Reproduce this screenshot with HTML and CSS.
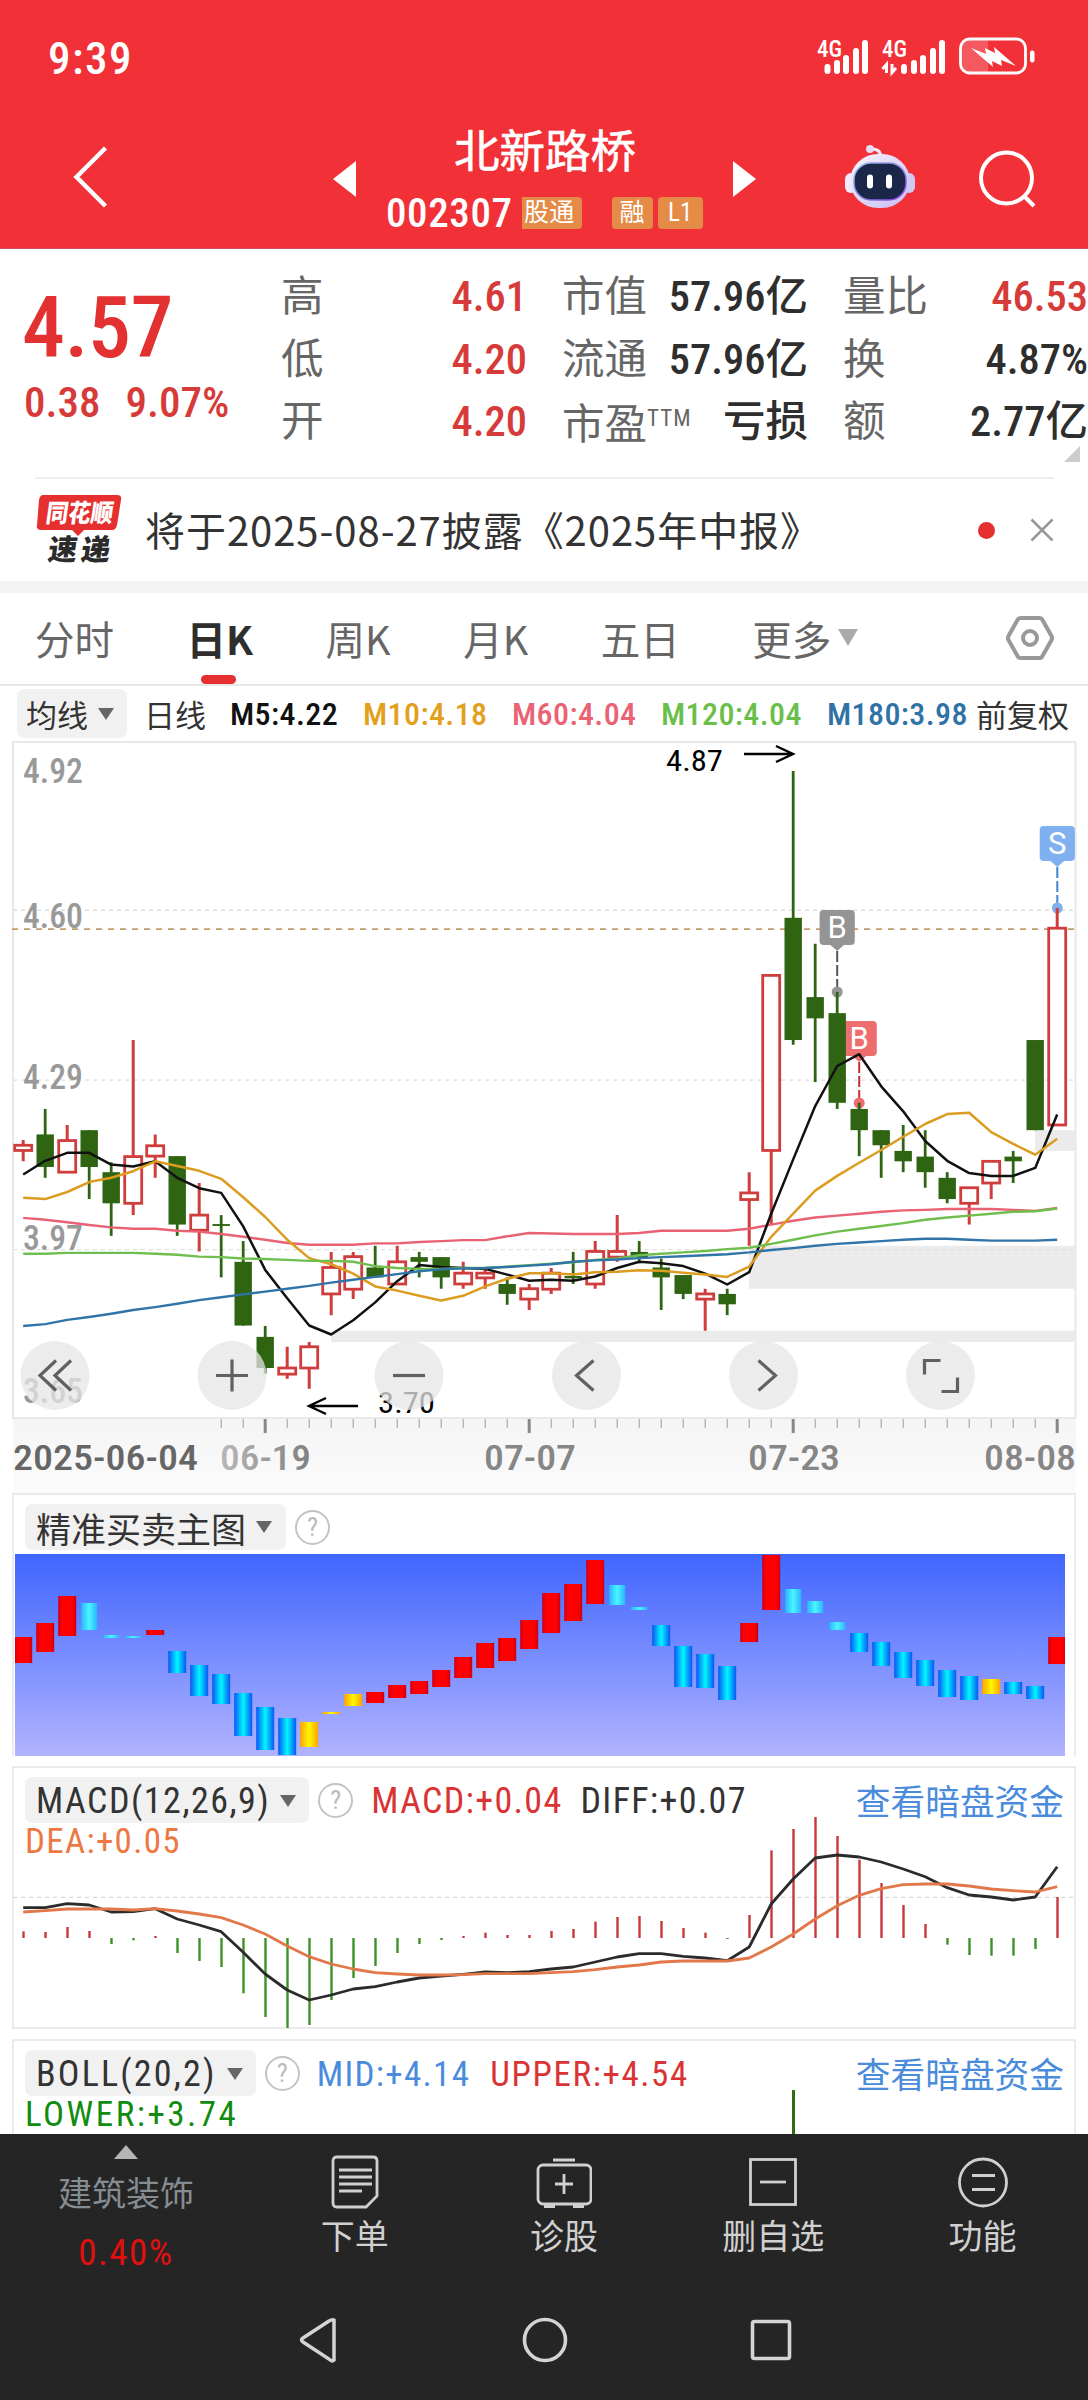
FILE: index.html
```html
<!DOCTYPE html>
<html lang="zh-CN">
<head>
<meta charset="utf-8">
<title>北新路桥 002307</title>
<link rel="stylesheet" href="styles.css">
</head>
<body>
<header class="top">
  <div class="status">
    <span class="clock">9:39</span>
    <svg class="status-icons" width="220" height="40" viewBox="0 0 220 40">
      <g fill="#fff" font-size="23" class="cond">
        <text x="1" y="18" textLength="25">4G</text>
        <text x="66" y="18" textLength="25">4G</text>
      </g>
      <g stroke="#fff" stroke-width="6" stroke-linecap="round">
        <path d="M11.500 28v4M21 24v8M30 19v13M40 12v20M49 4v28"/>
        <path d="M88 28v4M98 24v8M107 19v13M117 12v20M126 4v28"/>
      </g>
      <path d="M70.500 34V25.500l-4 4.500M76 25v8.500l4-4.500" fill="none" stroke="#fff" stroke-width="3"/>
      <path d="M152 1h20v32h-20q-7-1-7-8V9q0-7 7-8z" fill="#fff" opacity=".2"/>
      <rect x="144.500" y="0" width="65" height="34" rx="9" fill="none" stroke="#fff" stroke-width="2.800"/>
      <rect x="214" y="11.500" width="4.500" height="12" rx="2.200" fill="#fff"/>
      <path d="M155 9l15 6-1-6 10 5-1-6 22 19-15-6 1 6-10-5 1 6z" fill="#fff"/>
    </svg>
  </div>
  <div class="title-bar">
    <svg class="back" width="40" height="68" viewBox="0 0 40 68"><path d="M35.500 5L6.500 34l29 29" fill="none" stroke="#fff" stroke-width="4.500"/></svg>
    <svg class="prev" width="24" height="36" viewBox="0 0 24 36"><path d="M23 0v36L0 18z" fill="#fff"/></svg>
    <div class="stock">
      <h1>北新路桥</h1>
      <div class="code-row">
        <span class="code">002307</span>
        <span class="tag tag-cut">股通</span>
        <span class="tag tag-gap">融</span>
        <span class="tag tag-level">L1</span>
      </div>
    </div>
    <svg class="next" width="24" height="36" viewBox="0 0 24 36"><path d="M0 0v36l23-18z" fill="#fff"/></svg>
    <svg class="robot" width="72" height="68" viewBox="0 0 72 68">
      <defs>
        <linearGradient id="head" x1="0" y1="0" x2="1" y2="1"><stop offset="0" stop-color="#fbf4fb"/><stop offset="1" stop-color="#c4bdf4"/></linearGradient>
        <linearGradient id="rim" x1="0" y1="0" x2="1" y2="1"><stop offset="0" stop-color="#8fc3e8"/><stop offset="1" stop-color="#8a3fe0"/></linearGradient>
      </defs>
      <path d="M27 6q9-1 10 8" fill="none" stroke="#f3e6f5" stroke-width="3"/>
      <circle cx="26" cy="6" r="4" fill="#eadcf3"/>
      <rect x="1" y="30" width="12" height="20" rx="6" fill="#efe9fb"/>
      <rect x="59" y="30" width="12" height="20" rx="6" fill="#cfc8f5"/>
      <rect x="6" y="11" width="60" height="54" rx="28" fill="url(#head)"/>
      <rect x="10" y="20" width="52" height="37" rx="17" fill="#1b2749" stroke="url(#rim)" stroke-width="1.500"/>
      <path d="M26 34.500v8M45 34.500v8" stroke="#fff" stroke-width="6" stroke-linecap="round"/>
    </svg>
    <svg class="search" width="64" height="64" viewBox="0 0 64 64"><g fill="none" stroke="#fff" stroke-width="4"><circle cx="31.500" cy="31" r="25.500"/><path d="M49 49l10 10"/></g></svg>
  </div>
</header>

<section class="quote">
  <div class="price-box">
    <div class="price">4.57</div>
    <div class="change"><span>0.38</span><span>9.07%</span></div>
  </div>
  <dl class="stats">
    <div><dt>高</dt><dd class="up">4.61</dd></div>
    <div><dt>市值</dt><dd>57.96亿</dd></div>
    <div><dt>量比</dt><dd class="up">46.53</dd></div>
    <div><dt>低</dt><dd class="up">4.20</dd></div>
    <div><dt>流通</dt><dd>57.96亿</dd></div>
    <div><dt>换</dt><dd>4.87%</dd></div>
    <div><dt>开</dt><dd class="up">4.20</dd></div>
    <div><dt>市盈<small>TTM</small></dt><dd>亏损</dd></div>
    <div><dt>额</dt><dd>2.77亿</dd></div>
  </dl>
  <span class="corner"></span>
</section>

<section class="news">
  <svg class="brand" width="88" height="84" viewBox="0 0 88 84">
    <path d="M8 8h74q5 0 4 5l-4 25q-1 5-5 5H49l-6 6-6-6H6q-5 0-4-5l2-25q1-5 4-5z" fill="#e5302f"/>
    <g class="cjk" font-weight="900">
      <text transform="translate(10 35) skewX(-8)" font-size="25" fill="#fff" textLength="67" lengthAdjust="spacingAndGlyphs">同花顺</text>
      <text transform="translate(12 73) skewX(-8)" font-size="29" fill="#2b2b2b" textLength="62">速递</text>
    </g>
  </svg>
  <span class="headline">将于2025-08-27披露《2025年中报》</span>
  <span class="dot"></span>
  <svg width="24" height="24" viewBox="0 0 24 24"><path d="M1.500 1.500l21 21M22.500 1.500l-21 21" stroke="#999" stroke-width="2.500"/></svg>
</section>

<nav class="tabs">
  <span>分时</span>
  <span class="active">日K</span>
  <span>周K</span>
  <span>月K</span>
  <span>五日</span>
  <span>更多<i class="caret light"></i></span>
  <svg class="gear" width="50" height="50" viewBox="0 0 50 50"><g fill="none" stroke="#999" stroke-width="4"><path d="M15.500 5h19q2 0 3 2l9 16q1 2 0 4l-9 16q-1 2-3 2h-19q-2 0-3-2L3.500 27q-1-2 0-4l9-16q1-2 3-2z"/><circle cx="25" cy="25" r="7"/></g></svg>
</nav>

<div class="ma-row">
  <span class="pill">均线<i class="caret"></i></span>
  <span class="ma-name">日线</span>
  <b class="m5">M5:4.22</b>
  <b class="m10">M10:4.18</b>
  <b class="m60">M60:4.04</b>
  <b class="m120">M120:4.04</b>
  <b class="m180">M180:3.98</b>
  <span class="adjust">前复权</span>
</div>

<svg id="kline" class="block cond" width="1088" height="752" viewBox="0 0 1088 752"></svg>

<section class="panel panel-main">
  <div class="panel-head">
    <span class="pill">精准买卖主图<i class="caret"></i></span>
    <span class="help">?</span>
  </div>
  <svg id="signal" class="block" width="1050" height="202" viewBox="15 0 1050 202"></svg>
</section>

<section class="panel panel-macd">
  <div class="panel-head">
    <span class="pill num">MACD(12,26,9)<i class="caret"></i></span>
    <span class="help">?</span>
    <span class="num red">MACD:+0.04</span>
    <span class="num diff">DIFF:+0.07</span>
    <a class="more">查看暗盘资金</a>
  </div>
  <div class="num second dea">DEA:+0.05</div>
  <svg id="macd" class="overlay" width="1060" height="261" viewBox="13 1767 1060 261"></svg>
</section>

<section class="panel panel-boll">
  <div class="panel-head">
    <span class="pill num">BOLL(20,2)<i class="caret"></i></span>
    <span class="help">?</span>
    <span class="num blue">MID:+4.14</span>
    <span class="num upper">UPPER:+4.54</span>
    <a class="more">查看暗盘资金</a>
  </div>
  <div class="num second lower">LOWER:+3.74</div>
  <span class="boll-wick"></span>
</section>

<footer class="bottom">
  <div class="actions">
    <div class="sector">
      <i class="tri-up"></i>
      <span>建筑装饰</span>
      <em>0.40%</em>
    </div>
    <div class="action">
      <svg width="56" height="56" viewBox="0 0 56 56"><g fill="none" stroke="#d0d0d0" stroke-width="2.800"><path d="M10 3h36q4 0 4 4v35L39 53H10q-4 0-4-4V7q0-4 4-4z"/><path d="M12 16h33M12 23h33M12 30h33M12 37h23"/></g></svg>
      <span>下单</span>
    </div>
    <div class="action">
      <svg width="56" height="56" viewBox="0 0 56 56"><g fill="none" stroke="#d0d0d0" stroke-width="2.800"><rect x="2" y="11" width="53" height="39" rx="5"/><path d="M17 6h22M28 20v20M19 30h18M8 52.500h11M37 52.500h11"/></g></svg>
      <span>诊股</span>
    </div>
    <div class="action">
      <svg width="56" height="56" viewBox="0 0 56 56"><g fill="none" stroke="#d0d0d0" stroke-width="2.800"><rect x="5.500" y="5.500" width="45" height="45"/><path d="M15 28h26"/></g></svg>
      <span>删自选</span>
    </div>
    <div class="action">
      <svg width="56" height="56" viewBox="0 0 56 56"><g fill="none" stroke="#d0d0d0" stroke-width="2.800"><circle cx="28" cy="28.500" r="23.500"/><path d="M17 21.500h23M17 35.500h23"/></g></svg>
      <span>功能</span>
    </div>
  </div>
  <div class="sysnav">
    <svg width="48" height="48" viewBox="0 0 48 48"><path d="M39 4v40Q37 46 34 43L8 26q-3-2 0-4L34 5q3-2 5-1z" fill="none" stroke="#d4d4d4" stroke-width="3.500"/></svg>
    <svg width="48" height="48" viewBox="0 0 48 48"><circle cx="24" cy="24" r="20.500" fill="none" stroke="#d4d4d4" stroke-width="3.600"/></svg>
    <svg width="48" height="48" viewBox="0 0 48 48"><rect x="5.500" y="5.500" width="37" height="37" rx="2" fill="none" stroke="#d4d4d4" stroke-width="3.600"/></svg>
  </div>
</footer>
<script src="script.js"></script>
</body>
</html>
```
FILE: styles.css
```css
* { box-sizing: border-box; }
body {
  margin: 0;
  width: 1088px;
  height: 2400px;
  overflow: hidden;
  background: #fff;
  color: #333;
  font-family: Roboto, "Noto Sans CJK SC", sans-serif;
  font-stretch: 75%;
  display: flex;
  flex-direction: column;
}
body > * { flex: none; }
.cond { font-family: Roboto, sans-serif; font-stretch: 75%; font-weight: 500; }
.cjk, .headline { font-family: "Noto Sans CJK SC", sans-serif; }
.block { display: block; }

.top { height: 249px; background: #f13037; color: #fff; border-bottom: 1px solid #c9525a; }
.status { display: flex; justify-content: space-between; align-items: flex-start; height: 117px; padding: 31px 52px 0 48px; }
.clock { font-size: 45px; font-weight: 500; letter-spacing: 1.500px; line-height: 56px; }
.status-icons { margin-top: 8px; overflow: visible; }
.title-bar { display: flex; align-items: flex-start; height: 131px; }
.back { margin: 26px 0 0 70px; }
.prev { margin: 44px 0 0 223px; }
.stock { width: 376px; text-align: center; }
.next { margin-top: 44px; }
.robot { margin: 26px 0 0 87px; }
.search { margin: 30px 0 0 59px; }
.stock h1 { margin: 6px 0 0; font-size: 45.500px; line-height: 60px; font-weight: 400; -webkit-text-stroke: .6px #fff; }
.code-row { display: flex; align-items: center; height: 36px; margin: 12px 0 0 29px; }
.code { font-size: 41px; font-weight: 500; letter-spacing: .6px; width: 136px; text-align: left; }
.tag { height: 32px; line-height: 31px; padding: 0 8px; border-radius: 4px; background: #e48b48; font-size: 25px; letter-spacing: .3px; }
.tag + .tag { margin-left: 5px; }
.tag.tag-level { padding: 0 10px; }
.tag.tag-cut { padding: 0 7px 0 2px; border-radius: 0 4px 4px 0; }
.tag.tag-gap { margin-left: 30px; }

.quote { position: relative; display: flex; height: 228px; }
.price-box { width: 281px; padding-left: 24px; color: #e23130; }
.price { margin: 28px 0 0 -2px; font-size: 86px; line-height: 102px; font-weight: 500; letter-spacing: -.5px; }
.change { display: flex; gap: 25px; margin-top: -2px; font-size: 43px; line-height: 50px; font-weight: 500; color: #d63b3a; }
.stats { display: grid; grid-template-columns: 246px 246px 245px; grid-auto-rows: 62.500px; column-gap: 35px; margin: 17px 0 0; }
.stats div { display: flex; justify-content: space-between; align-items: center; white-space: nowrap; }
.stats dt { font-size: 42.500px; line-height: 62px; color: #666; }
.stats small { font-size: 23px; vertical-align: 13px; letter-spacing: 1px; }
.stats dd { margin: 0; font-size: 42.500px; line-height: 62px; font-weight: 500; color: #2e2e2e; }
.stats dd.up { color: #d63b3a; }
.corner { position: absolute; right: 8px; bottom: 15px; border: 8.500px solid transparent; border-right-color: #ccc; border-bottom-color: #ccc; }

.news { display: flex; align-items: center; height: 104px; margin: 0 34px 0 35px; border-top: 2px solid #eee; }
.brand { margin-top: -3px; }
.headline { margin: -3px 0 0 22px; font-size: 40px; letter-spacing: .95px; white-space: nowrap; }
.dot { width: 17px; height: 17px; margin: 0 35px 0 auto; border-radius: 50%; background: #e5302f; }

.tabs { display: flex; align-items: center; gap: 72.500px; height: 105px; padding: 0 33px 0 35px; border-top: 12px solid #f4f4f4; border-bottom: 2px solid #e8e8e8; font-size: 39.500px; color: #666; white-space: nowrap; }
.tabs span { position: relative; display: flex; align-items: center; margin-top: -2px; line-height: 60px; font-family: "Noto Sans CJK SC", sans-serif; }
.tabs .active { color: #2e2e2e; font-weight: 700; }
.tabs .active::after { content: ""; position: absolute; left: 14px; bottom: -16px; width: 35px; height: 9px; border-radius: 5px; background: #e5302f; }
.gear { margin: -1px 0 0 auto; }
.caret { display: inline-block; border: solid transparent; border-width: 12px 8.500px 0; border-top-color: #666; }
.caret.light { margin-left: 7px; border-width: 17px 10.500px 0; border-top-color: #aaa; }

.pill { display: inline-flex; align-items: center; border-radius: 7px; background: #f1f1f1; white-space: nowrap; }
.ma-row { display: flex; align-items: center; height: 55px; padding: 0 0 0 17px; font-size: 31px; white-space: nowrap; }
.ma-row .pill { width: 110px; height: 49px; padding-left: 9px; gap: 10px; }
.ma-row .ma-name { margin-left: 17px; }
.ma-row b { font-weight: 500; font-size: 32px; letter-spacing: .4px; }
.m5 { width: 133px; margin-left: 24px; color: #111; }
.m10 { width: 149px; color: #e2a01c; }
.m60 { width: 149px; color: #ea6274; }
.m120 { width: 166px; color: #6abf4b; }
.m180 { width: 149px; color: #2f72a5; }

.panel { position: relative; width: 1064px; margin-left: 12px; border: 2px solid #ebebeb; }
.panel-main { height: 264px; padding-left: 1px; border-bottom-color: transparent; }
.panel-macd { height: 263px; margin-top: 9px; }
.panel-boll { height: 95px; margin-top: 10px; border-bottom: 0; }
.panel-head { display: flex; align-items: center; height: 46px; margin: 9px 0 0 11px; padding-right: 10px; white-space: nowrap; font-size: 35px; }
.panel-main .panel-head { margin: 9px 0 4px 10px; }
.panel-head .pill { height: 46px; padding: 0 14px 0 11px; gap: 10px; font-size: 35px; }
.panel-head .pill.num { padding-right: 13px; letter-spacing: 1.500px; font-size: 36px; }
.panel-boll .panel-head .pill.num { letter-spacing: 2.200px; }
.num { letter-spacing: 1.300px; font-weight: 400; }
.panel-head > .num { padding-top: 2px; }
.help { width: 35px; height: 35px; margin-left: 9px; border: 2.500px solid #c4c4c4; border-radius: 50%; color: #bbb; font-size: 26px; line-height: 30px; text-align: center; }
.more { margin-left: auto; color: #4a8bdc; font-size: 34.700px; }
.second { margin-left: 11px; font-size: 35px; line-height: 37px; }
.red { margin-left: 18px; color: #d93433; font-size: 36px; }
.diff { margin-left: 18px; font-size: 36px; }
.dea { color: #ec7844; }
.blue { margin-left: 17px; color: #4a8bdc; }
.upper { margin-left: 20px; color: #d93433; letter-spacing: 1.600px; }
.lower { color: #108c10; letter-spacing: 2.500px; }
.overlay { position: absolute; left: -1px; top: -1px; }
.boll-wick { position: absolute; left: 778px; bottom: 0; width: 3px; height: 44px; background: #346a14; }

.bottom { height: 266px; background: #252525; color: #d0d0d0; }
.actions { display: flex; height: 156px; padding-left: 2px; }
.sector { display: flex; flex-direction: column; align-items: center; width: 248px; padding-top: 11px; font-size: 34px; color: #858d92; }
.tri-up { border: solid transparent; border-width: 0 12.500px 14px; border-bottom-color: #b4b4b4; }
.sector span { margin-top: 10px; line-height: 50px; }
.sector em { margin-top: 9px; font-style: normal; font-size: 37px; line-height: 50px; letter-spacing: 1.500px; color: #e01010; }
.action { display: flex; flex-direction: column; align-items: center; width: 209.300px; padding-top: 20px; font-size: 34px; }
.action span { margin-top: 2px; line-height: 50px; }
.sysnav { display: flex; gap: 178px; padding: 26px 0 0 295px; }
```
FILE: script.js
```js
const SVG = 'http://www.w3.org/2000/svg';
const STEP = 22;
const cx = i => 23.2 + i * STEP;

function add(parent, tag, attrs, text) {
  const node = document.createElementNS(SVG, tag);
  for (const key in attrs) node.setAttribute(key, attrs[key]);
  if (text !== undefined) node.textContent = text;
  parent.appendChild(node);
  return node;
}

function line(parent, values, y, color, width) {
  add(parent, 'polyline', {
    points: values.map((v, i) => cx(i).toFixed(1) + ',' + y(v).toFixed(1)).join(' '),
    fill: 'none', stroke: color, 'stroke-width': width, 'stroke-linejoin': 'round'
  });
}

/* ---------- candlestick chart ---------- */
(function () {
  const svg = document.getElementById('kline');
  const y = v => v * 0.4719 - 11;
  const defs = add(svg, 'defs', {});
  const grad = add(defs, 'linearGradient', { id: 'fade' });
  add(grad, 'stop', { offset: 0, 'stop-color': '#b8b8b8' });
  add(grad, 'stop', { offset: 1, 'stop-color': '#808080' });
  const bg = add(defs, 'linearGradient', { id: 'axis', x1: 0, y1: 0, x2: 0, y2: 1 });
  add(bg, 'stop', { offset: 0, 'stop-color': '#f5f5f5' });
  add(bg, 'stop', { offset: 1, 'stop-color': '#fbfbfb' });

  add(svg, 'rect', { x: 13, y: 678, width: 1063, height: 74, fill: 'url(#axis)' });

  // price gaps
  [[331, 1273, 1297], [749, 1093, 1184], [1035, 848, 892]].forEach(([x, a, b]) =>
    add(svg, 'rect', { x, y: y(a), width: 1076 - x, height: y(b) - y(a), fill: '#ebebeb' }));

  // grid
  [382, 742, 1101].forEach(v =>
    add(svg, 'path', { d: `M13 ${y(v)}H1075`, stroke: '#dedede', 'stroke-width': 1.3, 'stroke-dasharray': '4 4' }));
  add(svg, 'rect', { x: 13, y: 1, width: 1062.5, height: 676, fill: 'none', stroke: '#e8e8e8', 'stroke-width': 2 });

  // price labels
  [['4.92', 112], ['4.60', 419], ['4.29', 761], ['3.97', 1102], ['3.65', 1426]].forEach(([t, v]) =>
    add(svg, 'text', { x: 23, y: y(v), 'font-size': 35, fill: '#999', textLength: 60, lengthAdjust: 'spacingAndGlyphs' }, t));
  add(svg, 'path', { d: `M12 ${y(422)}H1075`, stroke: '#c49a6c', 'stroke-width': 1.6, 'stroke-dasharray': '6 6' });

  // low and high callouts
  add(svg, 'text', { x: 666, y: 30, 'font-size': 30, 'font-weight': 400, fill: '#000', textLength: 57, lengthAdjust: 'spacingAndGlyphs' }, '4.87');
  add(svg, 'text', { x: 378, y: 672, 'font-size': 30, 'font-weight': 400, fill: '#000', textLength: 57, lengthAdjust: 'spacingAndGlyphs' }, '3.70');
  add(svg, 'path', { d: 'M744 13h48M776 5l17 8-17 8M358 665h-48M326 657l-17 8 17 8', fill: 'none', stroke: '#000', 'stroke-width': 2.4 });

  // trade markers
  [[1057.3, 85, 167, 'S', '#7fb1f0', '#3f84d0'],
   [837.2, 169, 251, 'B', '#949494', '#555'],
   [859.2, 280, 362, 'B', '#ee6e70', '#c23034']].forEach(([x, top, dot, t, fill, stem]) => {
    add(svg, 'rect', { x: x - 17.6, y: top, width: 35.2, height: 35, rx: 4, fill });
    add(svg, 'path', { d: `M${x - 8} ${top + 34}h16l-8 7z`, fill });
    add(svg, 'text', { x, y: top + 28, 'font-size': 31, 'font-weight': 400, 'text-anchor': 'middle', fill: '#fff', style: 'font-stretch:100%' }, t);
    add(svg, 'path', { d: `M${x} ${top + 41}V${dot}`, stroke: stem, 'stroke-width': 2, 'stroke-dasharray': '11 3' });
    add(svg, 'circle', { cx: x, cy: dot, r: 5.5, fill });
  });

  // direction, high, body top, body bottom, low
  const candles = [
    ['R', 869, 880, 891, 914], ['G', 803, 857, 926, 949], ['R', 837, 870, 937, 937], ['G', 848, 848, 926, 994],
    ['G', 916, 937, 1003, 1072], ['R', 657, 904, 1003, 1028], ['R', 857, 881, 903, 949], ['G', 903, 903, 1048, 1072],
    ['R', 960, 1028, 1060, 1105], ['G', 1028, 1047, 1051, 1160], ['G', 1083, 1127, 1262, 1262], ['G', 1263, 1286, 1352, 1364],
    ['R', 1307, 1352, 1365, 1375], ['R', 1297, 1307, 1352, 1396], ['R', 1106, 1139, 1195, 1240], ['R', 1106, 1116, 1185, 1206],
    ['G', 1093, 1139, 1160, 1160], ['R', 1093, 1127, 1174, 1174], ['G', 1106, 1117, 1127, 1160], ['G', 1117, 1117, 1160, 1184],
    ['R', 1127, 1151, 1174, 1184], ['R', 1139, 1151, 1161, 1184], ['G', 1160, 1174, 1195, 1218], ['R', 1174, 1184, 1206, 1229],
    ['R', 1140, 1151, 1185, 1195], ['G', 1106, 1157, 1162, 1174], ['R', 1083, 1105, 1174, 1184], ['R', 1028, 1105, 1117, 1127],
    ['G', 1083, 1106, 1117, 1130], ['G', 1120, 1139, 1160, 1229], ['G', 1155, 1155, 1195, 1206], ['R', 1184, 1195, 1206, 1273],
    ['G', 1184, 1195, 1217, 1240], ['R', 937, 981, 995, 1093], ['R', 520, 520, 891, 1048], ['G', 87, 398, 657, 667],
    ['G', 453, 566, 611, 746], ['G', 555, 600, 790, 803], ['G', 790, 803, 848, 903], ['G', 848, 848, 880, 949],
    ['G', 837, 892, 914, 937], ['G', 848, 904, 937, 970], ['G', 937, 949, 994, 1003], ['R', 970, 970, 1003, 1048],
    ['R', 914, 914, 960, 994], ['G', 892, 904, 914, 960], ['G', 657, 657, 848, 848], ['R', 377, 420, 837, 837]
  ];
  candles.forEach(([dir, hi, top, bot, lo], i) => {
    const x = cx(i);
    if (dir === 'G') {
      add(svg, 'path', { d: `M${x} ${y(hi)}V${y(lo)}`, stroke: '#2f6512', 'stroke-width': 2.8 });
      add(svg, 'rect', { x: x - 8.7, y: y(top), width: 17.4, height: y(bot) - y(top), fill: '#2f6512' });
    } else {
      add(svg, 'path', { d: `M${x} ${y(hi)}V${y(top)}M${x} ${y(bot)}V${y(lo)}`, stroke: '#cf3d3c', 'stroke-width': 3 });
      add(svg, 'rect', { x: x - 8.5, y: y(top), width: 17, height: y(bot) - y(top), fill: '#fff', stroke: '#cf3d3c', 'stroke-width': 2.8 });
    }
  });

  line(svg, [1034,1038,1043,1049,1054,1057,1057,1061,1063,1068,1074,1080,1087,1091,1091,1091,1088,1088,1085,1083,1081,1081,1073,1066,1067,1068,1068,1068,1066,1061,1061,1061,1061,1057,1048,1040,1033,1029,1025,1021,1018,1017,1015,1015,1015,1017,1019,1013], y, '#e96273', 2.4);
  line(svg, [942,913,896,896,921,925,914,949,971,981,1052,1144,1204,1262,1281,1251,1213,1168,1134,1138,1140,1142,1154,1167,1165,1167,1158,1140,1127,1130,1136,1152,1175,1149,1025,910,797,712,687,755,808,871,913,939,945,945,928,815], y, '#111', 2.5);
  line(svg, [991,994,979,958,949,935,914,924,934,951,990,1032,1080,1119,1132,1152,1179,1188,1199,1209,1199,1179,1163,1151,1151,1154,1149,1148,1145,1146,1150,1154,1159,1137,1074,1025,976,945,917,890,862,835,814,811,852,877,900,866], y, '#dc9c20', 2.5);
  line(svg, [1110,1110,1108,1108,1108,1108,1110,1112,1116,1117,1120,1121,1123,1125,1125,1127,1136,1140,1142,1142,1140,1140,1137,1134,1131,1128,1123,1120,1113,1110,1107,1104,1100,1097,1089,1080,1071,1063,1057,1051,1045,1038,1033,1029,1025,1021,1020,1014], y, '#6fbe4e', 2.4);
  line(svg, [1263,1259,1250,1244,1237,1229,1223,1216,1208,1202,1196,1190,1184,1178,1171,1165,1159,1153,1147,1143,1141,1140,1138,1135,1132,1127,1124,1122,1119,1117,1115,1113,1111,1107,1102,1098,1093,1089,1086,1083,1080,1078,1078,1080,1082,1082,1082,1080], y, '#3174a8', 2.4);

  // chart controls
  const icons = [
    [55, 'M1-15l-16 15 16 15M16-15l-16 15 16 15'],
    [232, 'M-16 0h32M0-16v32'],
    [409, 'M-16 0h32'],
    [586.5, 'M7-15l-17 15 17 15'],
    [763.5, 'M-5-15l17 15-17 15'],
    [940.5, 'M-16-1v-14h16M17 2v14h-16']
  ];
  icons.forEach(([x, d]) => {
    const g = add(svg, 'g', { transform: `translate(${x} 634.5)` });
    add(g, 'circle', { r: 34.5, fill: '#e6e6e6', opacity: 0.75 });
    add(g, 'path', { d, fill: 'none', stroke: '#606060', 'stroke-width': 3.2 });
  });

  // time axis
  for (let i = 9; i < 48; i++) {
    const major = [11, 23, 35, 47].includes(i);
    add(svg, 'path', { d: `M${cx(i)} 678v${major ? 14 : 9}`, stroke: major ? '#888' : '#aaa', 'stroke-width': major ? 3 : 1.2 });
  }
  [['2025-06-04', 13, 185, '#666'], ['06-19', 220, 91, 'url(#fade)'], ['07-07', 484, 92, '#868686'],
   ['07-23', 748, 92, '#868686'], ['08-08', 984, 92, '#868686']].forEach(([t, x, w, fill]) =>
    add(svg, 'text', { x, y: 729, 'font-size': 35, textLength: w, lengthAdjust: 'spacingAndGlyphs', fill }, t));
})();

/* ---------- buy / sell signal chart ---------- */
(function () {
  const svg = document.getElementById('signal');
  const y = v => (v - 222) / 3;
  const defs = add(svg, 'defs', {});
  const sky = add(defs, 'linearGradient', { id: 'sky', x1: 0, y1: 0, x2: 0, y2: 1 });
  add(sky, 'stop', { offset: 0, 'stop-color': '#3f66ff' });
  add(sky, 'stop', { offset: 1, 'stop-color': '#b1b3fe' });
  const ramps = { R: ['#c4001c', '#fe0000'], B: ['#0a55f5', '#00f8ff'], C: ['#2db4ff', '#49f6ff'], Y: ['#ffa200', '#fff800'] };
  for (const k in ramps) {
    const g = add(defs, 'linearGradient', { id: 'bar' + k });
    const [edge, mid] = ramps[k];
    const stops = k === 'R' ? [[0, edge], [0.2, mid], [0.8, mid], [1, edge]] : [[0, edge], [0.5, mid], [1, edge]];
    stops.forEach(([o, c]) => add(g, 'stop', { offset: o, 'stop-color': c }));
  }
  add(svg, 'rect', { x: 15, y: 0, width: 1050, height: 202, fill: 'url(#sky)' });
  const bars = 'R471-549 R429-516 R348-468 C369-450 C465-474 C468-474 R450-465 B513-579 B555-648 B582-672 B639-768 B681-810 B714-825 Y726-801 Y696-702 Y642-678 R636-669 R615-654 R603-642 R570-621 R531-594 R489-564 R474-543 R420-507 R339-459 R312-423 R240-372 C315-375 C381-390 B435-498 B498-621 B522-624 B558-660 R429-486 R225-390 C327-399 C363-399 C426-450 B459-516 B486-558 B516-594 B540-618 B570-651 B588-660 Y597-642 B606-642 B618-657 R471-552';
  bars.split(' ').forEach((s, i) => {
    const [a, b] = s.slice(1).split('-').map(Number);
    const w = s[0] === 'C' ? 16 : 18;
    add(svg, 'rect', { x: cx(i) - w / 2, y: y(a), width: w, height: y(b) - y(a), fill: `url(#bar${s[0]})` });
  });
})();

/* ---------- MACD ---------- */
(function () {
  const svg = document.getElementById('macd');
  const y = v => 1760 + v / 3;
  add(svg, 'path', { d: `M13 ${y(412)}H1075`, stroke: '#d8d8d8', 'stroke-width': 1.3, 'stroke-dasharray': '4 4' });
  const zero = 534;
  [514,516,501,513,552,541,528,579,603,621,700,771,804,795,720,654,618,579,552,540,528,518,525,525,513,507,485,471,468,483,504,518,537,465,271,207,171,228,299,369,435,492,554,585,587,587,567,411].forEach((v, i) =>
    add(svg, 'path', { d: `M${cx(i) + 0.3} ${y(zero)}V${y(v)}`, stroke: v < zero ? '#c8383a' : '#3c9324', 'stroke-width': 2.4 }));
  line(svg, [443,443,431,435,456,455,446,477,495,515,577,642,690,720,705,687,680,666,654,648,643,636,638,635,627,621,606,591,581,581,589,594,602,561,432,357,294,285,291,306,327,350,383,405,411,420,411,320], y, '#2b2b2b', 2.8);
  line(svg, [456,452,447,447,447,450,446,453,462,473,495,522,558,590,612,627,638,642,645,645,644,641,641,641,638,635,629,621,615,606,603,603,603,594,561,522,477,437,406,386,374,372,372,378,387,392,396,380], y, '#e2774a', 2.8);
})();
```
